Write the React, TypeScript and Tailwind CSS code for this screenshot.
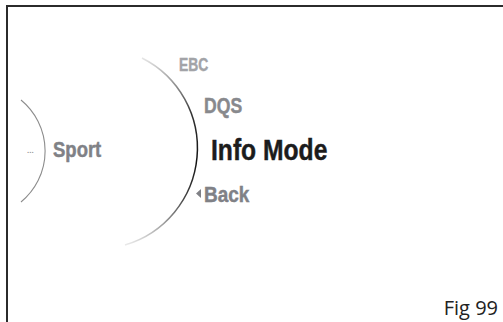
const condensed = { fontFamily: '"Liberation Sans", Arial, sans-serif' };

function Arcs() {
  return (
    <svg
      className="absolute -left-[8px] -top-[7px] pointer-events-none"
      width={503}
      height={322}
      viewBox="0 0 503 322"
    >
      <defs>
        <linearGradient id="bigArc" gradientUnits="userSpaceOnUse" x1="0" y1="58" x2="0" y2="245">
          <stop offset="0" stopColor="#e6e6e6" />
          <stop offset="0.3" stopColor="#333" />
          <stop offset="0.55" stopColor="#111" />
          <stop offset="0.75" stopColor="#444" />
          <stop offset="1" stopColor="#eaeaea" />
        </linearGradient>
      </defs>
      <path d="M142 58 A101 101 0 0 1 125 245" fill="none" stroke="url(#bigArc)" strokeWidth={1.5} />
      <path d="M21 100 A66 66 0 0 1 21 202" fill="none" stroke="#8c8c8c" strokeWidth={1.1} />
    </svg>
  );
}

export default function App() {
  return (
    <div className="w-[503px] h-[322px] bg-white overflow-hidden pt-[5px] pl-[6px]">
      <div className="relative h-full flex flex-col border-t-2 border-l-2 border-[#2b2b2b]">
        <Arcs />
        <div className="flex font-bold [-webkit-text-stroke:0.45px_currentColor]" style={condensed}>
          {/* previous level */}
          <div className="w-[171px] shrink-0 flex items-center pt-[133px] pl-[19px] h-fit">
            <span className="w-[8px] text-[8px] leading-none text-[#9a9a9a] [-webkit-text-stroke:0px]">...</span>
            <span className="ml-[18px] inline-block origin-left scale-x-[0.86] text-[21.5px] leading-none text-[#808186]">
              Sport
            </span>
          </div>
          {/* current menu */}
          <div className="flex flex-col items-start pt-[49px]">
            <span className="origin-left scale-x-[0.77] text-[18px] leading-none text-[#a2a3a7]">EBC</span>
            <span className="ml-[25px] mt-[21px] origin-left scale-x-[0.8] text-[22px] leading-none text-[#88898d]">
              DQS
            </span>
            <span className="ml-[32px] mt-[19px] origin-left scale-x-[0.85] text-[29px] leading-none text-[#1c1c1c]">
              Info Mode
            </span>
            <div className="ml-[17px] mt-[19px] flex items-start text-[#808186]">
              <svg width={5} height={9} viewBox="0 0 5 9" className="mt-[5px] shrink-0">
                <path d="M5 0 L0 4.5 L5 9 Z" fill="#808186" />
              </svg>
              <span className="ml-[3px] origin-left scale-x-[0.86] text-[22px] leading-none">Back</span>
            </div>
          </div>
        </div>
        <div
          className="mt-auto self-end pr-[5px] pb-[4px] text-[20px] leading-none text-[#222]"
          style={{ fontFamily: '"Open Sans", sans-serif' }}
        >
          Fig 99
        </div>
      </div>
    </div>
  );
}
